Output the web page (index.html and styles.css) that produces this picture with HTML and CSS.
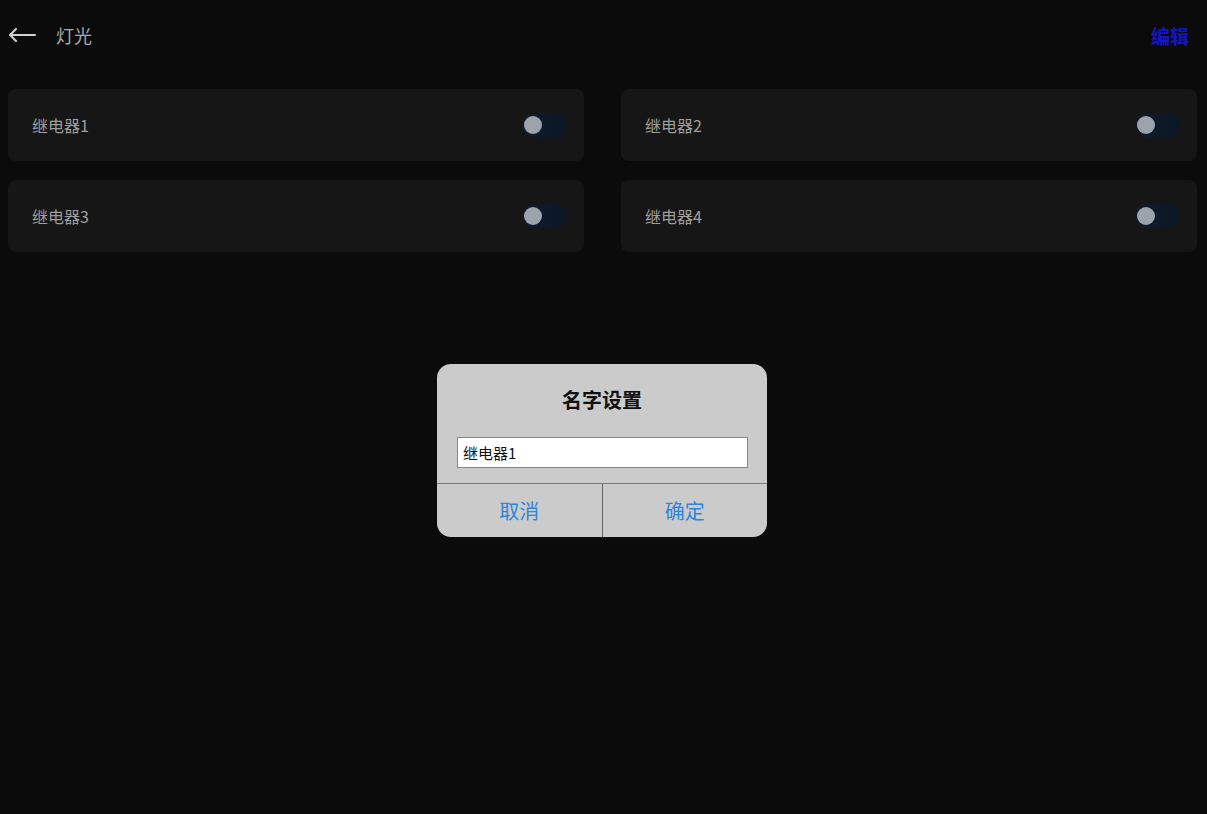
FILE: index.html
```html
<!DOCTYPE html>
<html lang="zh">
<head>
<meta charset="utf-8">
<title>灯光</title>
<link rel="stylesheet" href="styles.css">
</head>
<body>
<div class="page">
  <header class="topbar">
    <div class="back">
      <svg class="arrow" width="28" height="14" viewBox="0 0 28 14"><path d="M27 7H2M8 1L2 7l6 6" fill="none" stroke="#d0d0d0" stroke-width="2" stroke-linecap="round" stroke-linejoin="round"/></svg>
      <span class="title">灯光</span>
    </div>
    <span class="edit">编辑</span>
  </header>
  <main class="grid">
    <div class="card"><span class="name">继电器1</span><span class="toggle"><span class="knob"></span></span></div>
    <div class="card"><span class="name">继电器2</span><span class="toggle"><span class="knob"></span></span></div>
    <div class="card"><span class="name">继电器3</span><span class="toggle"><span class="knob"></span></span></div>
    <div class="card"><span class="name">继电器4</span><span class="toggle"><span class="knob"></span></span></div>
  </main>
</div>
<div class="dialog">
  <div class="dlg-title">名字设置</div>
  <div class="dlg-body"><div class="input">继电器1</div></div>
  <div class="dlg-actions">
    <span class="btn">取消</span>
    <span class="btn">确定</span>
  </div>
</div>
</body>
</html>
```
FILE: styles.css
```css
html, body {
  margin: 0;
  padding: 0;
  background: #0b0b0b;
  width: 1207px;
  height: 814px;
  overflow: hidden;
  font-family: "Noto Sans CJK SC", "Noto Sans", sans-serif;
}
.page {
  display: flex;
  flex-direction: column;
}
.topbar {
  height: 70px;
  display: flex;
  align-items: center;
  justify-content: space-between;
  padding: 0 18px 0 8px;
}
.back {
  display: flex;
  align-items: center;
  gap: 20px;
}
.arrow { display: block; }
.title {
  color: #a8a8a8;
  font-size: 18px;
}
.edit {
  color: #1515c8;
  font-size: 19px;
  font-weight: 700;
}
.grid {
  display: grid;
  grid-template-columns: 576px 576px;
  column-gap: 37px;
  row-gap: 19px;
  padding: 19px 0 0 8px;
}
.card {
  height: 72px;
  background: #161616;
  border-radius: 8px;
  display: flex;
  align-items: center;
  justify-content: space-between;
  padding: 0 17px 0 24px;
  box-sizing: border-box;
}
.name {
  color: #9e9e9e;
  font-size: 16px;
}
.toggle {
  width: 44px;
  height: 24px;
  border-radius: 12px;
  background: linear-gradient(90deg, #0f1c2c, #0c1725);
  display: flex;
  align-items: center;
  padding-left: 1px;
  box-sizing: border-box;
}
.knob {
  width: 18px;
  height: 18px;
  border-radius: 50%;
  background: #9da3ad;
}
.dialog {
  position: absolute;
  left: 437px;
  top: 364px;
  width: 330px;
  height: 173px;
  background: #cbcbcb;
  border-radius: 14px;
  display: flex;
  flex-direction: column;
  overflow: hidden;
}
.dlg-title {
  text-align: center;
  font-size: 20px;
  font-weight: 700;
  color: #111;
  padding-top: 22px;
  line-height: 28px;
}
.dlg-body {
  padding: 23px 19px 0 20px;
}
.input {
  height: 31px;
  box-sizing: border-box;
  background: #fff;
  border: 1px solid #888;
  font-size: 15px;
  color: #111;
  padding-left: 5px;
  display: flex;
  align-items: center;
}
.dlg-actions {
  margin-top: 15px;
  border-top: 1px solid #7a7a7a;
  display: flex;
  flex: 1;
}
.btn {
  flex: 1;
  display: flex;
  align-items: center;
  justify-content: center;
  color: #2d86dc;
  font-size: 20px;
}
.btn + .btn {
  border-left: 1px solid #666;
}
```
